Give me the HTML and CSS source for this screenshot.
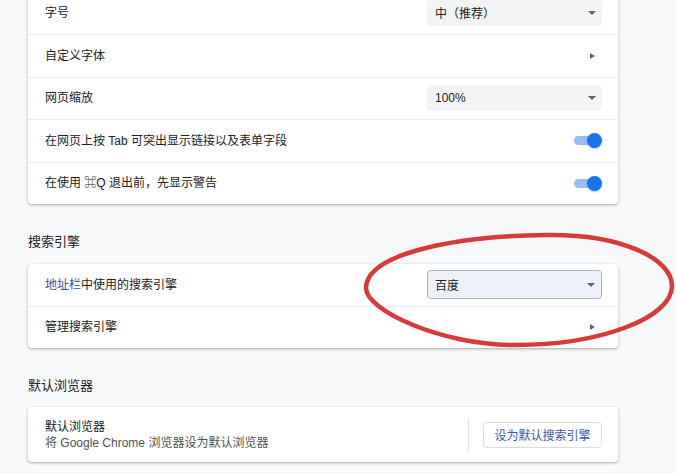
FILE: index.html
```html
<!DOCTYPE html>
<html lang="zh-CN">
<head>
    <meta charset="UTF-8">
    <meta name="viewport" content="width=device-width, initial-scale=1.0">
    <title>设置</title>
    <link rel="stylesheet" href="styles.css">
</head>
<body>
    <main class="page">
        <!-- Appearance card (scrolled, top is cut off) -->
        <section class="card card-top">
            <div class="row">
                <span class="label">字号</span>
                <div class="select"><span>中（推荐）</span><i class="caret"></i></div>
            </div>
            <div class="row">
                <span class="label">自定义字体</span>
                <i class="subpage-arrow"></i>
            </div>
            <div class="row">
                <span class="label">网页缩放</span>
                <div class="select"><span>100%</span><i class="caret"></i></div>
            </div>
            <div class="row">
                <span class="label">在网页上按 Tab 可突出显示链接以及表单字段</span>
                <div class="toggle"><span class="knob"></span></div>
            </div>
            <div class="row">
                <span class="label">在使用 ⌘Q 退出前，先显示警告</span>
                <div class="toggle"><span class="knob"></span></div>
            </div>
        </section>

        <h2 class="section-title">搜索引擎</h2>
        <section class="card">
            <div class="row row-short">
                <span class="label"><a class="link">地址栏</a>中使用的搜索引擎</span>
                <div class="select select-focus"><span>百度</span><i class="caret"></i></div>
            </div>
            <div class="row row-short">
                <span class="label">管理搜索引擎</span>
                <i class="subpage-arrow"></i>
            </div>
        </section>

        <h2 class="section-title">默认浏览器</h2>
        <section class="card">
            <div class="row row-tall">
                <div class="label-stack">
                    <span class="label">默认浏览器</span>
                    <span class="label secondary">将 Google Chrome 浏览器设为默认浏览器</span>
                </div>
                <div class="actions">
                    <span class="divider"></span>
                    <button class="action-button">设为默认搜索引擎</button>
                </div>
            </div>
        </section>
    </main>

    <!-- red hand-drawn circle round the search engine select -->
    <svg class="annotation" width="676" height="473" viewBox="0 0 676 473">
        <path d="M366 288 C366 255 450 236 547 235 C620 234 672 258 672 286 C672 318 600 345 515 345 C440 345 366 310 366 288 Z"
              fill="none" stroke="#d8393b" stroke-width="4.5"/>
    </svg>
</body>
</html>
```

FILE: styles.css
```css
* {
    margin: 0;
    padding: 0;
    box-sizing: border-box;
}

body {
    background-color: #f8f9fa;
    font-family: 'Liberation Sans', 'Noto Sans CJK SC', sans-serif;
    font-size: 12px;
    color: #202124;
    position: relative;
    overflow: hidden;
    height: 473px;
}

.page {
    width: 590px;
    margin-left: 28px;
}

.card {
    background: white;
    border-radius: 4px;
    box-shadow: 0 1px 2px rgba(60, 64, 67, 0.28), 0 1px 3px 1px rgba(60, 64, 67, 0.12);
}

.card-top {
    margin-top: -8.5px;
    border-radius: 0 0 4px 4px;
}

.row {
    height: 42.5px;
    display: flex;
    align-items: center;
    justify-content: space-between;
    padding: 0 16px 0 17px;
}

.row + .row {
    border-top: 1px solid #ececec;
}

.row-short {
    height: 42px;
}

.row-tall {
    height: 55px;
}

.label {
    line-height: 16px;
    white-space: nowrap;
}

.link {
    color: #3b4f9e;
}

.label-stack {
    display: flex;
    flex-direction: column;
}

.secondary {
    color: #4d5156;
}

.section-title {
    font-size: 13px;
    font-weight: normal;
    line-height: 20px;
    padding-top: 28px;
    margin-bottom: 11.5px;
    color: #202124;
}

/* dropdowns */
.select {
    width: 175px;
    height: 26px;
    background-color: #f1f3f4;
    border-radius: 4px;
    display: flex;
    align-items: center;
    justify-content: space-between;
    padding: 0 6px 0 8px;
}

.select-focus {
    height: 29px;
    background-color: #eef1f7;
    border: 1px solid #a3b2cf;
    padding-left: 7px;
}

.caret {
    width: 0;
    height: 0;
    border-left: 4px solid transparent;
    border-right: 4px solid transparent;
    border-top: 4px solid #5f6368;
}

.subpage-arrow {
    width: 0;
    height: 0;
    border-top: 3.5px solid transparent;
    border-bottom: 3.5px solid transparent;
    border-left: 5px solid #5f6368;
    margin-right: 7px;
}

/* toggles */
.toggle {
    position: relative;
    width: 28px;
    height: 15px;
    display: flex;
    align-items: center;
}

.toggle::before {
    content: '';
    width: 24px;
    height: 9px;
    border-radius: 5px;
    background-color: #9dbcf3;
}

.knob {
    position: absolute;
    right: 0;
    top: 0;
    width: 15px;
    height: 15px;
    border-radius: 50%;
    background-color: #1a73e8;
    box-shadow: 0 1px 2px rgba(26, 115, 232, 0.4);
}

/* default browser */
.actions {
    display: flex;
    align-items: center;
}

.divider {
    width: 1px;
    height: 34px;
    background-color: #e3e3e3;
    margin-right: 14px;
}

.action-button {
    width: 119px;
    height: 26px;
    background: white;
    border: 1px solid #dadce0;
    border-radius: 4px;
    color: #3b57a8;
    font-family: 'Liberation Sans', 'Noto Sans CJK SC', sans-serif;
    font-size: 12px;
}

.annotation {
    position: absolute;
    left: 0;
    top: 0;
    pointer-events: none;
}
```
